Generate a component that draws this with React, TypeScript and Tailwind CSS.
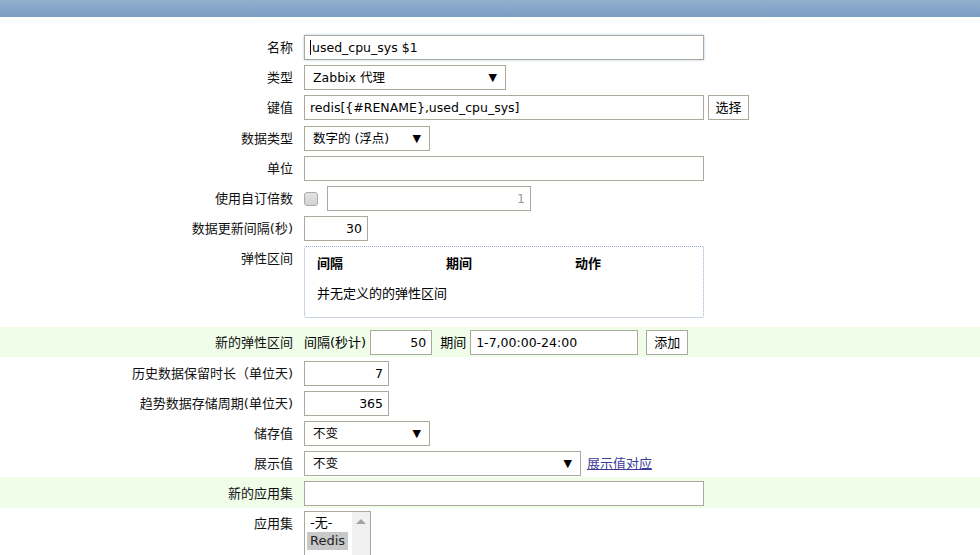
import React from 'react';

const font = 'font-["DejaVu_Sans","Noto_Sans_CJK_SC",sans-serif]';
const box = 'h-[25px] border border-[#aaa99b] bg-white px-[5px] text-[12.5px] leading-[23px] outline-none';

const Label: React.FC<{ text: string; top?: string }> = ({ text, top = 'pt-[4px]' }) => (
    <div className={`w-[293px] shrink-0 text-right text-[13px] leading-[25px] text-[#111] ${top}`}>{text}</div>
);

const Row: React.FC<{ label: string; green?: boolean; h?: string; pt?: string; children: React.ReactNode }> = ({ label, green, h = 'h-[30px]', pt = 'pt-[4px]', children }) => (
    <div className={`flex gap-[11px] ${h} ${green ? 'bg-[#effde9]' : ''}`}>
        <Label text={label} top={pt} />
        <div className={`flex items-start gap-[4px] ${pt}`}>{children}</div>
    </div>
);

const Select: React.FC<{ value: string; w: string }> = ({ value, w }) => (
    <div className={`${box} ${w} flex items-center justify-between pl-[8px] pr-[8px]`}>
        <span>{value}</span>
        <span className="text-[11px] leading-none">▼</span>
    </div>
);

export default function App() {
    return (
        <div className={`${font} min-h-[555px] bg-white text-black`}>
            <div className="h-[17px] bg-gradient-to-b from-[#93b0cd] to-[#789dc3]" />
            <div className="pt-[14px]">
                <Row label="名称">
                    <div className={`${box} w-[400px] border-[#78a6e8] shadow-[0_0_2px_#9cc0f0]`}>
                        <span className="mr-px inline-block h-[15px] w-px translate-y-[3px] bg-black" />
                        used_cpu_sys $1
                    </div>
                </Row>
                <Row label="类型">
                    <Select value="Zabbix 代理" w="w-[202px]" />
                </Row>
                <Row label="键值" h="h-[31px]">
                    <div className={`${box} w-[400px]`}>redis[&#123;#RENAME&#125;,used_cpu_sys]</div>
                    <button className={`${box} w-[41px] px-0 text-center text-[13px]`}>选择</button>
                </Row>
                <Row label="数据类型">
                    <Select value="数字的 (浮点)" w="w-[126px]" />
                </Row>
                <Row label="单位">
                    <div className={`${box} w-[400px]`} />
                </Row>
                <Row label="使用自订倍数">
                    <div className="flex items-center gap-[9px]">
                        <span className="mt-px h-[14px] w-[14px] rounded-[3px] border border-[#aaa] bg-gradient-to-b from-[#e4e4e4] to-[#d2d2d2]" />
                        <div className={`${box} w-[204px] text-right text-[#9a9a9a]`}>1</div>
                    </div>
                </Row>
                <Row label="数据更新间隔(秒)">
                    <div className={`${box} w-[64px] text-right`}>30</div>
                </Row>
                <Row label="弹性区间" h="h-[85px]" pt="pt-[4px]">
                    <div className="h-[72px] w-[400px] rounded-[2px] border border-dotted border-[#98a6d2] px-[12px] text-[13px]">
                        <div className="grid grid-cols-[129px_129px_1fr] pt-[8px] font-bold leading-[18px]">
                            <span>间隔</span>
                            <span>期间</span>
                            <span>动作</span>
                        </div>
                        <div className="pt-[12px] leading-[18px]">并无定义的的弹性区间</div>
                    </div>
                </Row>
                <Row label="新的弹性区间" green pt="pt-[3px]">
                    <span className="text-[13px] leading-[25px]">间隔(秒计)</span>
                    <div className={`${box} w-[62px] text-right`}>50</div>
                    <span className="ml-[4px] text-[13px] leading-[25px]">期间</span>
                    <div className={`${box} w-[168px]`}>1-7,00:00-24:00</div>
                    <button className={`${box} ml-[4px] w-[42px] px-0 text-center text-[13px]`}>添加</button>
                </Row>
                <Row label="历史数据保留时长（单位天)">
                    <div className={`${box} w-[85px] text-right`}>7</div>
                </Row>
                <Row label="趋势数据存储周期(单位天)">
                    <div className={`${box} w-[85px] text-right`}>365</div>
                </Row>
                <Row label="储存值">
                    <Select value="不变" w="w-[126px]" />
                </Row>
                <Row label="展示值">
                    <Select value="不变" w="w-[277px]" />
                    <a className="ml-[2px] text-[13px] leading-[25px] text-[#3b3b96] underline">展示值对应</a>
                </Row>
                <Row label="新的应用集" green h="h-[31px]">
                    <div className={`${box} w-[400px]`} />
                </Row>
                <Row label="应用集" h="h-[60px]" pt="pt-[3px]">
                    <div className="flex h-[55px] w-[67px] border border-[#aaa99b] bg-white">
                        <div className="flex-1 pl-[2px] pt-[2px] text-[13px] leading-[18px]">
                            <div className="pl-[3px]">-无-</div>
                            <div className="w-fit bg-[#c8c8c8] px-[3px] text-[#222]">Redis</div>
                        </div>
                        <div className="flex w-[18px] justify-center bg-[#f0f0f0] pt-[7px]">
                            <span className="h-0 w-0 border-x-[5px] border-b-[5px] border-x-transparent border-b-[#a3a3a3]" />
                        </div>
                    </div>
                </Row>
            </div>
        </div>
    );
}
